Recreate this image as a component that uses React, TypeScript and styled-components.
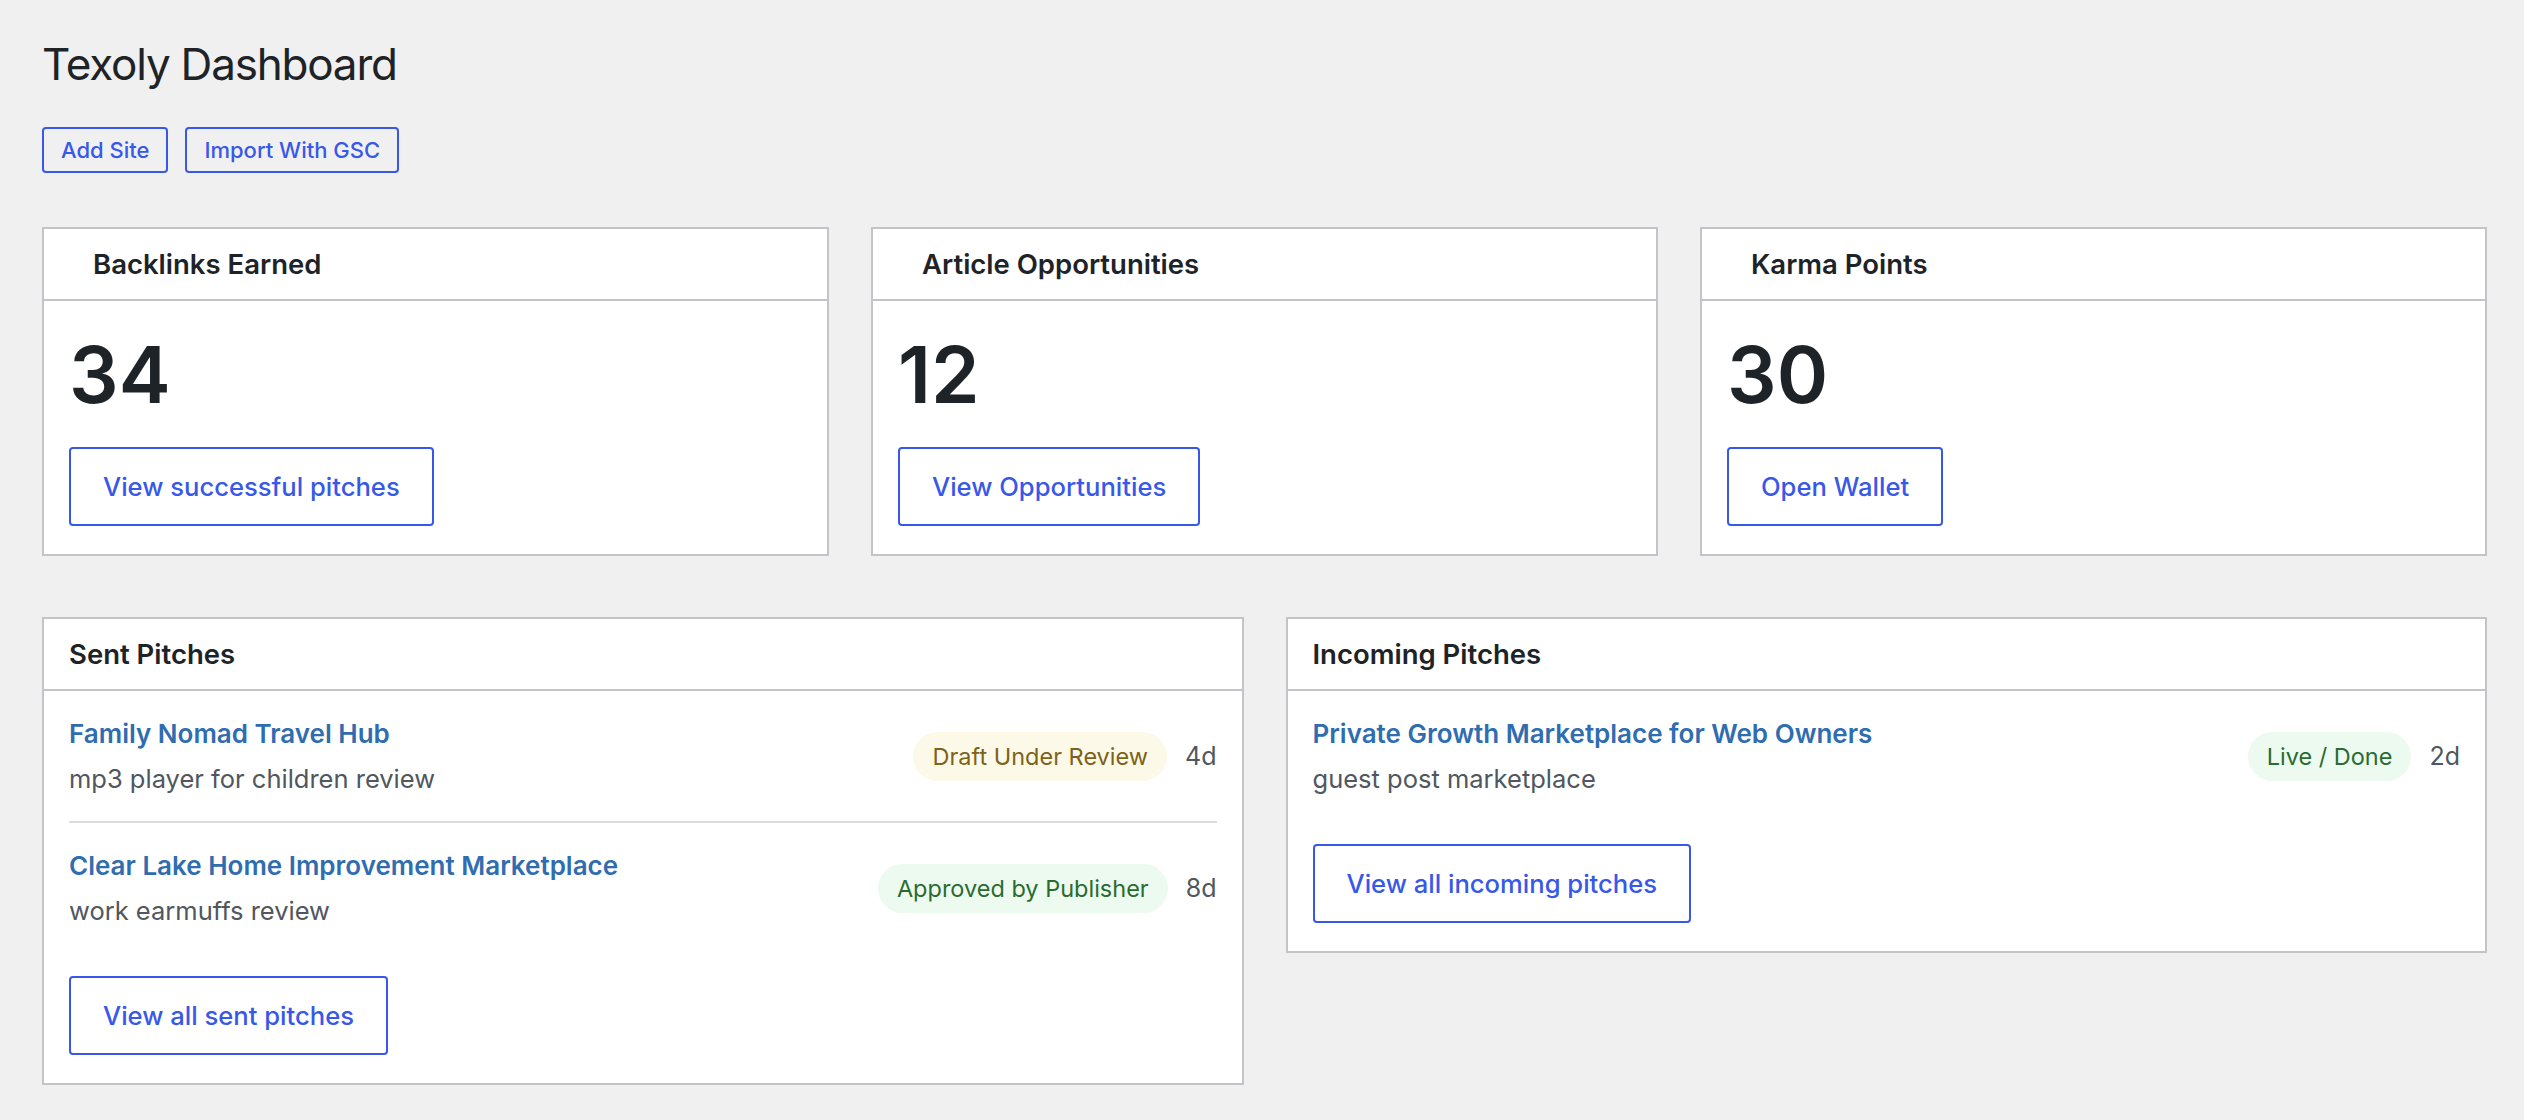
import React from 'react';
import styled, { createGlobalStyle } from 'styled-components';

const GlobalStyle = createGlobalStyle`
  html, body {
    margin: 0;
    padding: 0;
    background: #f0f0f1;
  }
  body {
    font-family: Inter, "Noto Sans", "Liberation Sans", sans-serif;
    color: #1d2327;
  }
`;

const Page = styled.div`
  padding: 34px 37px 40px 42px;
  display: flex;
  flex-direction: column;
`;

const Title = styled.h1`
  margin: 0;
  font-size: 44px;
  letter-spacing: -1.2px;
  line-height: 60px;
  font-weight: 400;
  color: #1d2327;
`;

const Toolbar = styled.div`
  display: flex;
  gap: 17px;
  margin-top: 33px;
`;

const Button = styled.button<{ $size?: 'small' | 'large' }>`
  display: inline-flex;
  align-items: center;
  box-sizing: border-box;
  border: 2px solid #3858e9;
  border-radius: 4px;
  background: ${(p) => (p.$size === 'small' ? 'transparent' : '#fff')};
  color: #3858e9;
  font-family: inherit;
  font-weight: 500;
  cursor: pointer;
  height: ${(p) => (p.$size === 'small' ? '46px' : '79px')};
  padding: ${(p) => (p.$size === 'small' ? '0 17px' : '0 32px')};
  font-size: ${(p) => (p.$size === 'small' ? '22px' : '25.6px')};
  align-self: flex-start;
`;

const StatGrid = styled.div`
  display: grid;
  grid-template-columns: repeat(3, 1fr);
  gap: 42px;
  margin-top: 54px;
`;

const PanelGrid = styled.div`
  display: grid;
  grid-template-columns: repeat(2, 1fr);
  gap: 42px;
  margin-top: 61px;
  align-items: start;
`;

const Card = styled.section`
  background: #fff;
  border: 2px solid #c3c4c7;
  display: flex;
  flex-direction: column;
`;

const CardHeader = styled.div<{ $indent?: boolean }>`
  height: 70px;
  display: flex;
  align-items: center;
  padding: 0 26px 0 ${(p) => (p.$indent ? '49px' : '25px')};
  border-bottom: 2px solid #c3c4c7;
  font-size: 27.5px;
  font-weight: 600;
  color: #1d2327;
`;

const CardBody = styled.div`
  padding: 25px 25px 28px 25px;
  display: flex;
  flex-direction: column;
`;

const BigNumber = styled.div`
  font-size: 78px;
  line-height: 94px;
  font-weight: 600;
  color: #1d2327;
  margin: 2px 0 25px;
`;

const ItemList = styled.div`
  display: flex;
  flex-direction: column;
`;

const Item = styled.div`
  display: flex;
  align-items: center;
  gap: 18px;
  padding: 25px 0;
  border-bottom: 2px solid #dcdcde;
  &:first-child {
    padding-top: 0;
  }
  &:last-child {
    border-bottom: none;
  }
`;

const ItemText = styled.div`
  flex: 1;
  display: flex;
  flex-direction: column;
  gap: 10px;
`;

const ItemLink = styled.a`
  font-size: 26px;
  line-height: 35px;
  font-weight: 600;
  color: #2f6db0;
  text-decoration: none;
`;

const ItemSub = styled.div`
  font-size: 25.5px;
  line-height: 35px;
  color: #50575e;
`;

const tones = {
  draft: { bg: '#fcf9e8', fg: '#7d6219' },
  approved: { bg: '#edfaef', fg: '#2a6b2f' },
};

const Badge = styled.span<{ $tone: keyof typeof tones }>`
  display: inline-flex;
  align-items: center;
  height: 49px;
  padding: 0 19px;
  border-radius: 25px;
  font-size: 23.5px;
  background: ${(p) => tones[p.$tone].bg};
  color: ${(p) => tones[p.$tone].fg};
  white-space: nowrap;
`;

const Age = styled.span`
  font-size: 25px;
  color: #50575e;
  min-width: 30px;
  text-align: right;
`;

const Footer = styled.div`
  margin-top: 23px;
`;

interface Pitch {
  title: string;
  keyword: string;
  status: string;
  tone: keyof typeof tones;
  age: string;
}

const sent: Pitch[] = [
  { title: 'Family Nomad Travel Hub', keyword: 'mp3 player for children review', status: 'Draft Under Review', tone: 'draft', age: '4d' },
  { title: 'Clear Lake Home Improvement Marketplace', keyword: 'work earmuffs review', status: 'Approved by Publisher', tone: 'approved', age: '8d' },
];

const incoming: Pitch[] = [
  { title: 'Private Growth Marketplace for Web Owners', keyword: 'guest post marketplace', status: 'Live / Done', tone: 'approved', age: '2d' },
];

const stats = [
  { label: 'Backlinks Earned', value: '34', action: 'View successful pitches' },
  { label: 'Article Opportunities', value: '12', action: 'View Opportunities' },
  { label: 'Karma Points', value: '30', action: 'Open Wallet' },
];

const PitchPanel: React.FC<{ title: string; pitches: Pitch[]; action: string }> = (props) => (
  <Card>
    <CardHeader>{props.title}</CardHeader>
    <CardBody>
      <ItemList>
        {props.pitches.map((p) => (
          <Item key={p.title}>
            <ItemText>
              <ItemLink href="#">{p.title}</ItemLink>
              <ItemSub>{p.keyword}</ItemSub>
            </ItemText>
            <Badge $tone={p.tone}>{p.status}</Badge>
            <Age>{p.age}</Age>
          </Item>
        ))}
      </ItemList>
      <Footer>
        <Button>{props.action}</Button>
      </Footer>
    </CardBody>
  </Card>
);

export default function App() {
  return (
    <>
      <GlobalStyle />
      <Page>
        <Title>Texoly Dashboard</Title>
        <Toolbar>
          <Button $size="small">Add Site</Button>
          <Button $size="small">Import With GSC</Button>
        </Toolbar>
        <StatGrid>
          {stats.map((s) => (
            <Card key={s.label}>
              <CardHeader $indent>{s.label}</CardHeader>
              <CardBody>
                <BigNumber>{s.value}</BigNumber>
                <Button>{s.action}</Button>
              </CardBody>
            </Card>
          ))}
        </StatGrid>
        <PanelGrid>
          <PitchPanel title="Sent Pitches" pitches={sent} action="View all sent pitches" />
          <PitchPanel title="Incoming Pitches" pitches={incoming} action="View all incoming pitches" />
        </PanelGrid>
      </Page>
    </>
  );
}
